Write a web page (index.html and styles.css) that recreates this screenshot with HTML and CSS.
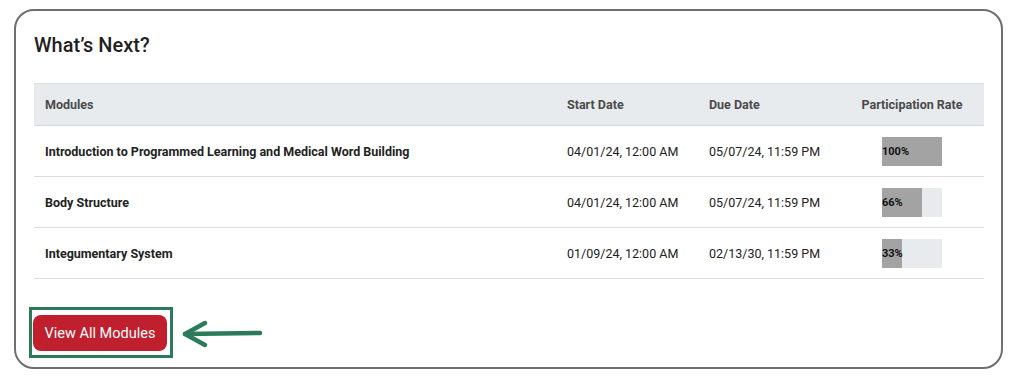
FILE: index.html
```html
<!DOCTYPE html>
<html lang="en">
  <head>
    <meta charset="UTF-8" />
    <meta name="viewport" content="width=device-width, initial-scale=1.0" />
    <title>What's Next</title>
    <link rel="stylesheet" href="styles.css">
  </head>
  <body>
    <div class="card">
      <h2 class="title">What’s Next?</h2>
      <table class="modules">
        <colgroup>
          <col class="col-name">
          <col class="col-start">
          <col class="col-due">
          <col class="col-rate">
        </colgroup>
        <thead>
          <tr>
            <th>Modules</th>
            <th>Start Date</th>
            <th>Due Date</th>
            <th class="rate">Participation Rate</th>
          </tr>
        </thead>
        <tbody>
          <tr>
            <td class="name">Introduction to Programmed Learning and Medical Word Building</td>
            <td>04/01/24, 12:00 AM</td>
            <td>05/07/24, 11:59 PM</td>
            <td class="rate"><div class="bar"><div class="fill" style="width: 100%"></div><span>100%</span></div></td>
          </tr>
          <tr>
            <td class="name">Body Structure</td>
            <td>04/01/24, 12:00 AM</td>
            <td>05/07/24, 11:59 PM</td>
            <td class="rate"><div class="bar"><div class="fill" style="width: 66%"></div><span>66%</span></div></td>
          </tr>
          <tr>
            <td class="name">Integumentary System</td>
            <td>01/09/24, 12:00 AM</td>
            <td>02/13/30, 11:59 PM</td>
            <td class="rate"><div class="bar"><div class="fill" style="width: 33%"></div><span>33%</span></div></td>
          </tr>
        </tbody>
      </table>
      <div class="actions">
        <div class="highlight">
          <button class="btn">View All Modules</button>
        </div>
        <svg class="arrow" width="82" height="30" viewBox="0 0 82 30">
          <path d="M4 15 L79 14" stroke="#2b7b5a" stroke-width="4.5" stroke-linecap="round" fill="none"/>
          <path d="M24 4 L4 15 L24 26" stroke="#2b7b5a" stroke-width="4.5" stroke-linecap="round" stroke-linejoin="round" fill="none"/>
        </svg>
      </div>
    </div>
  </body>
</html>
```

FILE: styles.css
```css
body {
  margin: 0;
  background: #fff;
  font-family: Roboto, "Liberation Sans", Arial, sans-serif;
  color: #222;
}

.card {
  box-sizing: border-box;
  margin: 9px 0 0 14px;
  width: 989px;
  height: 360px;
  border: 2px solid #6e6e6e;
  border-radius: 20px;
  padding: 22px 17px 0 18px;
}

.title {
  margin: 0;
  font-size: 20px;
  font-weight: 500;
  line-height: 24px;
  color: #1f1f1f;
}

.modules {
  margin-top: 26px;
  width: 950px;
  table-layout: fixed;
  border-collapse: collapse;
  font-size: 12.5px;
  white-space: nowrap;
}

.col-name { width: 522px; }
.col-start { width: 142px; }
.col-due { width: 142px; }
.col-rate { width: 144px; }

.modules th {
  background: #e8ebee;
  color: #4a4a4a;
  font-weight: 700;
  text-align: left;
  height: 42px;
  padding: 0 11px;
  border-top: 1px solid #dcdfe2;
  border-bottom: 1px solid #d6d9dc;
  box-sizing: border-box;
}

.modules td {
  height: 51px;
  padding: 0 11px;
  border-bottom: 1px solid #dcdcdc;
  box-sizing: border-box;
  color: #222;
}

.modules .rate {
  text-align: center;
}

.name {
  font-weight: 700;
}

.bar {
  position: relative;
  display: inline-block;
  vertical-align: middle;
  width: 60px;
  height: 29px;
  background: #e8ebee;
  text-align: left;
}

.fill {
  height: 100%;
  background: #a3a3a3;
}

.bar span {
  position: absolute;
  left: 0;
  top: 0;
  line-height: 29px;
  font-size: 11px;
  font-weight: 700;
  color: #111;
}

.actions {
  display: flex;
  align-items: center;
  margin: 28px 0 0 -5px;
}

.highlight {
  display: flex;
  border: 3px solid #2b7b5a;
  padding: 5px 3px 4px 1px;
}

.btn {
  background: #c01f2d;
  color: #fff;
  border: none;
  border-radius: 8px;
  width: 134px;
  height: 36px;
  font-family: Roboto, "Liberation Sans", Arial, sans-serif;
  font-size: 14.5px;
  cursor: pointer;
}

.arrow {
  margin-left: 8px;
  margin-top: 2px;
}
```
